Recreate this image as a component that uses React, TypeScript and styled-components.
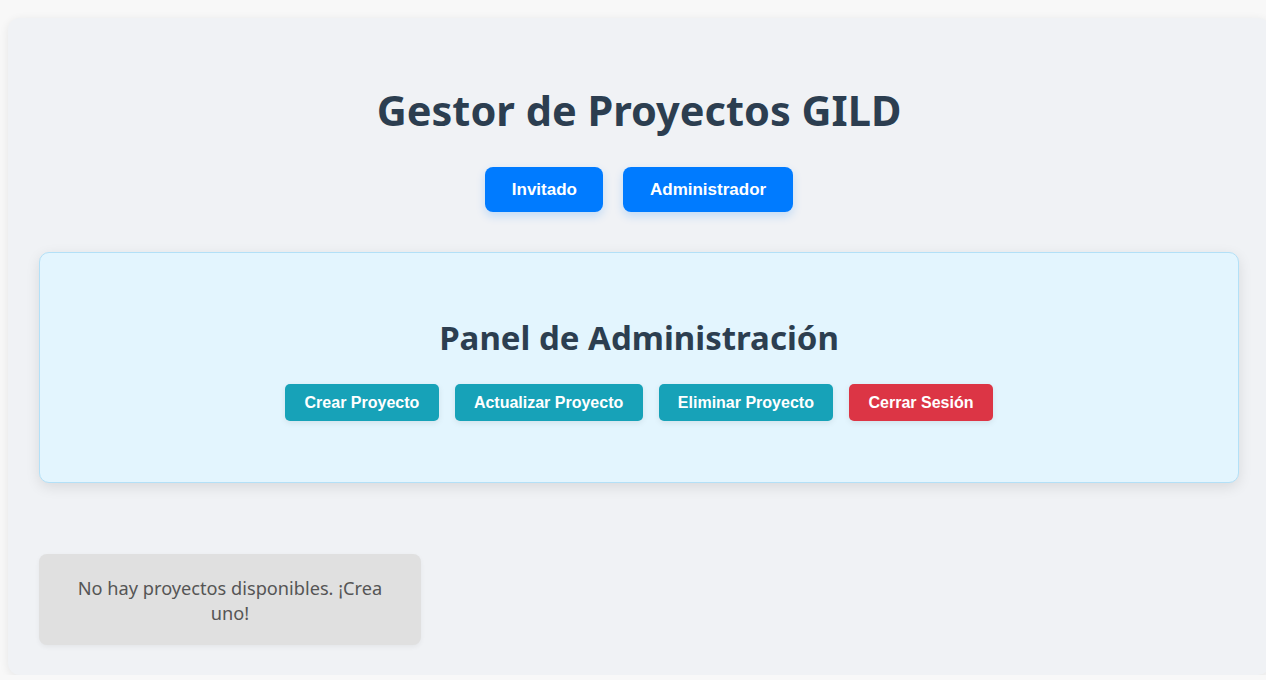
import React from "react";
import styled, { createGlobalStyle } from "styled-components";

const GlobalStyle = createGlobalStyle`
  html, body {
    margin: 0;
    padding: 0;
    background: #f8f8f8;
    overflow: hidden;
  }
  body {
    padding: 18px 0 0 8px;
    font-family: "Noto Sans", "Open Sans", sans-serif;
  }
`;

const Container = styled.div`
  box-sizing: border-box;
  width: 1262px;
  min-height: 657px;
  background: #f0f2f5;
  border-radius: 12px;
  box-shadow: 0 2px 10px rgba(0, 0, 0, 0.08);
  padding: 62px 31px 30px;
`;

const Title = styled.h1`
  margin: 0;
  text-align: center;
  color: #2c3e50;
  font-family: "Noto Sans", sans-serif;
  font-size: 41.5px;
  font-weight: 700;
  line-height: 60px;
`;

const RoleBar = styled.div`
  display: flex;
  justify-content: center;
  gap: 20px;
  margin-top: 27px;
`;

const RoleButton = styled.button`
  box-sizing: border-box;
  height: 45px;
  padding: 0 26.5px;
  border: none;
  border-radius: 8px;
  background: #007bff;
  color: #fff;
  font-family: "Liberation Sans", Arial, sans-serif;
  font-size: 17px;
  font-weight: 700;
  box-shadow: 0 4px 10px rgba(0, 123, 255, 0.2);
  cursor: pointer;
`;

const AdminPanel = styled.section`
  box-sizing: border-box;
  max-width: 1200px;
  margin: 40px auto 0;
  height: 231px;
  background: #e3f5fe;
  border: 1px solid #b3e0f7;
  border-radius: 10px;
  box-shadow: 0 4px 14px rgba(0, 0, 0, 0.1);
  display: flex;
  flex-direction: column;
  align-items: center;
  justify-content: center;
  padding-top: 1px;
`;

const PanelTitle = styled.h2`
  margin: 0;
  color: #2c3e50;
  font-family: "Noto Sans", sans-serif;
  font-size: 33px;
  font-weight: 700;
  line-height: 46px;
`;

const ActionBar = styled.div`
  display: flex;
  justify-content: center;
  gap: 16px;
  margin-top: 23px;
`;

const ActionButton = styled.button<{ $danger?: boolean }>`
  box-sizing: border-box;
  height: 37px;
  padding: 0 19.3px;
  border: none;
  border-radius: 5px;
  background: ${(p) => (p.$danger ? "#dc3545" : "#17a2b8")};
  color: #fff;
  font-family: "Liberation Sans", Arial, sans-serif;
  font-size: 16px;
  font-weight: 700;
  box-shadow: 0 2px 6px rgba(0, 0, 0, 0.08);
  cursor: pointer;
`;

const ProjectGrid = styled.div`
  display: grid;
  grid-template-columns: repeat(auto-fill, minmax(382px, 382px));
  margin-top: 71px;
`;

const EmptyCard = styled.div`
  box-sizing: border-box;
  height: 91px;
  background: #e0e0e0;
  border-radius: 8px;
  box-shadow: 0 2px 5px rgba(0, 0, 0, 0.05);
  color: #555;
  font-family: "Noto Sans", sans-serif;
  font-size: 18.2px;
  line-height: 25px;
  text-align: center;
  padding: 22px 30px;
`;

export default function App() {
  return (
    <>
      <GlobalStyle />
      <Container>
        <Title>Gestor de Proyectos GILD</Title>
        <RoleBar>
          <RoleButton>Invitado</RoleButton>
          <RoleButton>Administrador</RoleButton>
        </RoleBar>
        <AdminPanel>
          <PanelTitle>Panel de Administración</PanelTitle>
          <ActionBar>
            <ActionButton>Crear Proyecto</ActionButton>
            <ActionButton>Actualizar Proyecto</ActionButton>
            <ActionButton>Eliminar Proyecto</ActionButton>
            <ActionButton $danger>Cerrar Sesión</ActionButton>
          </ActionBar>
        </AdminPanel>
        <ProjectGrid>
          <EmptyCard>No hay proyectos disponibles. ¡Crea uno!</EmptyCard>
        </ProjectGrid>
      </Container>
    </>
  );
}
